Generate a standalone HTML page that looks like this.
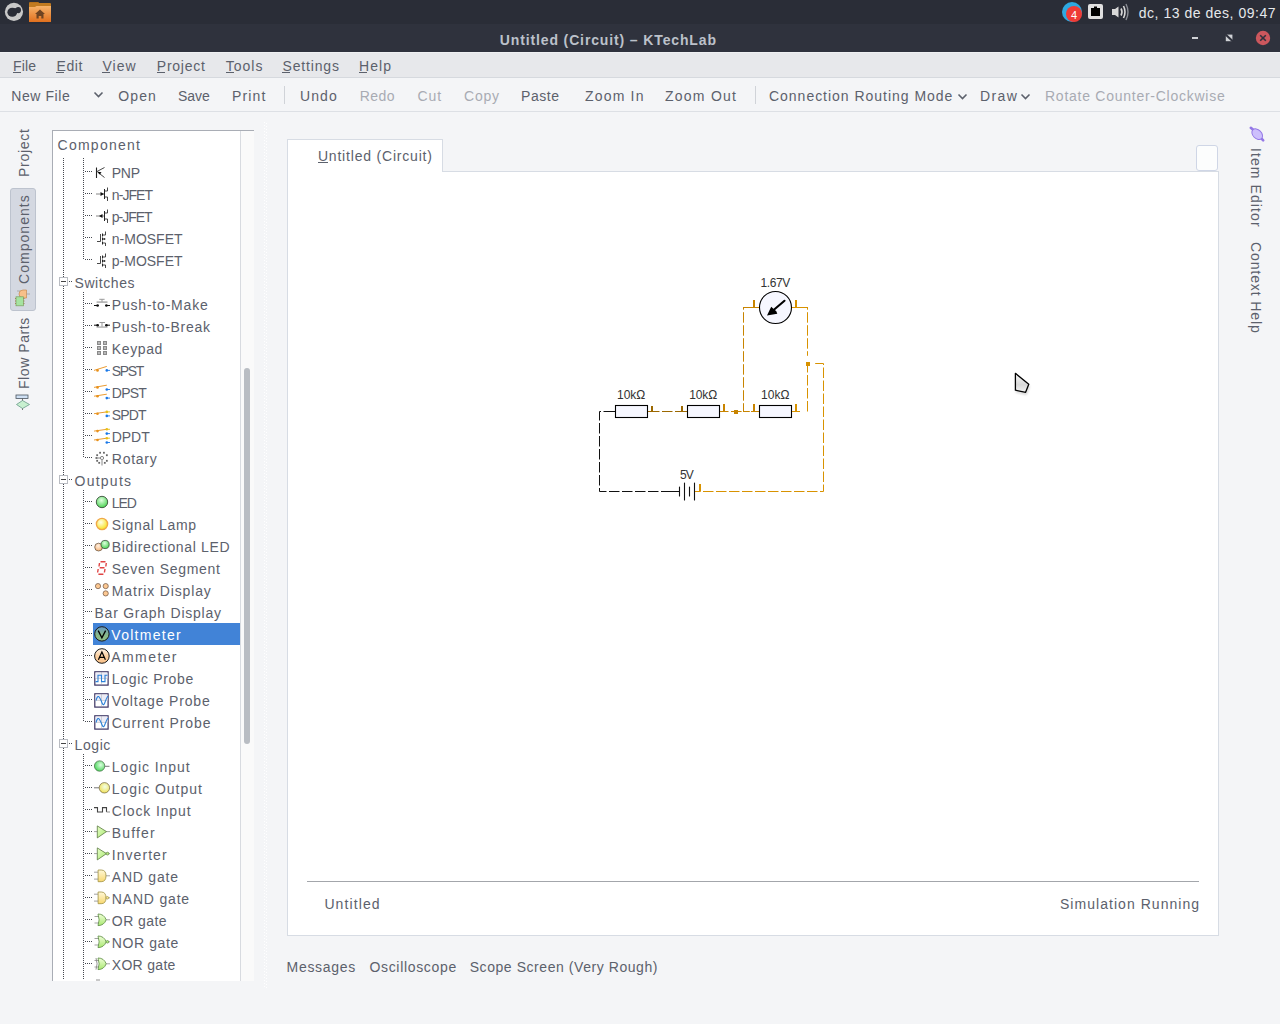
<!DOCTYPE html><html><head><meta charset="utf-8"><style>
html,body{margin:0;padding:0;width:1280px;height:1024px;overflow:hidden;background:#f4f5f7;position:relative;font-family:"Liberation Sans",sans-serif}
.t{position:absolute;white-space:nowrap;line-height:1;font-family:"Liberation Sans",sans-serif}
svg{overflow:visible}
</style></head><body>
<div style="position:absolute;left:0px;top:0px;width:1280px;height:24px;background:#2a2d37"></div>
<div style="position:absolute;left:0px;top:24px;width:1280px;height:28px;background:#2f323d"></div>
<div style="position:absolute;left:0px;top:52px;width:1280px;height:25px;background:#e7e8eb"></div>
<div style="position:absolute;left:0px;top:52px;width:1280px;height:1px;background:#eff0f2"></div>
<div style="position:absolute;left:0px;top:77px;width:1280px;height:1px;background:#d6d9de"></div>
<div style="position:absolute;left:0px;top:111px;width:1280px;height:1px;background:#dde0e5"></div>
<svg style="position:absolute;left:0;top:0" width="60" height="24">
<circle cx="13.95" cy="11.85" r="9.1" fill="#c8c8c8"/>
<ellipse cx="12.3" cy="12.3" rx="4.9" ry="4.5" fill="#2a2d37"/><ellipse cx="18.2" cy="10.1" rx="2.8" ry="3.1" fill="#2a2d37"/><path d="M13 8.5 L17 8 L17.5 12.5 L14 14 Z" fill="#2a2d37"/>
<rect x="29" y="2" width="10" height="4" rx="1" fill="#b4701a"/>
<rect x="29" y="3" width="22" height="5" rx="1" fill="#c07a20"/>
<defs><linearGradient id="fg" x1="0" y1="0" x2="0" y2="1"><stop offset="0" stop-color="#f6b36a"/><stop offset="1" stop-color="#e0701e"/></linearGradient></defs>
<path d="M29 7 L35 7 L36.5 6 L51 6 L51 22 L29 22 Z" fill="url(#fg)"/>
<path d="M40 9.5 L45 14 L43.5 14 L43.5 18.5 L41.3 18.5 L41.3 16 L38.7 16 L38.7 18.5 L36.5 18.5 L36.5 14 L35 14 Z" fill="#6e4422"/>
</svg>
<svg style="position:absolute;left:1055px;top:0" width="80" height="24">
<circle cx="17" cy="12" r="10" fill="#2ea8e0"/>
<circle cx="19" cy="14" r="8" fill="#ef3b36"/>
<text x="19" y="18.5" font-family="Liberation Sans" font-size="11" fill="#fff" text-anchor="middle">4</text>
<rect x="33" y="4" width="15" height="15" rx="2" fill="#e0e0e0"/>
<path d="M36 8 L39 8 L39 6.5 L42 6.5 L42 8 L45 8 L45 16 L36 16 Z" fill="#000"/>
<path d="M57 9 L60 9 L63.5 6.5 L63.5 17.5 L60 15 L57 15 Z" fill="#d8d8d8"/>
<path d="M66 8.5 Q68 12 66 15.5" stroke="#d8d8d8" stroke-width="1.6" fill="none"/>
<path d="M68.5 6 Q71.5 12 68.5 18" stroke="#d8d8d8" stroke-width="1.6" fill="none"/>
<path d="M71 4 Q75 12 71 20" stroke="#8a8d94" stroke-width="1.4" fill="none"/>
</svg>
<div class="t" style="left:1138.80px;top:6.15px;font-size:14px;letter-spacing:0.517px;color:#e6e8eb;font-weight:normal;">dc, 13 de des, 09:47</div>
<div class="t" style="left:499.80px;top:32.95px;font-size:14px;letter-spacing:0.869px;color:#bcc1ca;font-weight:bold;">Untitled (Circuit) – KTechLab</div>
<div style="position:absolute;left:1192px;top:37px;width:6px;height:2px;background:#d0d2d6"></div>
<svg style="position:absolute;left:1222px;top:30px" width="16" height="16">
<rect x="3.8" y="4.6" width="6.6" height="6.6" fill="#d0d2d6"/><path d="M3.3 4.2 L11 11.6" stroke="#2f323d" stroke-width="2.1"/></svg>
<svg style="position:absolute;left:1254px;top:29px" width="18" height="18">
<circle cx="9" cy="9" r="7.2" fill="#cc575d"/><path d="M6.2 6.2 L11.8 11.8 M11.8 6.2 L6.2 11.8" stroke="#2f323d" stroke-width="1.6"/></svg>
<div class="t" style="left:13.00px;top:59.15px;font-size:14px;letter-spacing:0.125px;color:#5c616c;font-weight:normal;">File</div>
<div style="position:absolute;left:13px;top:72px;width:8px;height:1px;background:#5c616c"></div>
<div class="t" style="left:56.50px;top:59.15px;font-size:14px;letter-spacing:0.625px;color:#5c616c;font-weight:normal;">Edit</div>
<div style="position:absolute;left:56px;top:72px;width:8px;height:1px;background:#5c616c"></div>
<div class="t" style="left:102.50px;top:59.15px;font-size:14px;letter-spacing:1.017px;color:#5c616c;font-weight:normal;">View</div>
<div style="position:absolute;left:102px;top:72px;width:8px;height:1px;background:#5c616c"></div>
<div class="t" style="left:156.80px;top:59.15px;font-size:14px;letter-spacing:0.762px;color:#5c616c;font-weight:normal;">Project</div>
<div style="position:absolute;left:157px;top:72px;width:8px;height:1px;background:#5c616c"></div>
<div class="t" style="left:225.80px;top:59.15px;font-size:14px;letter-spacing:0.987px;color:#5c616c;font-weight:normal;">Tools</div>
<div style="position:absolute;left:226px;top:72px;width:8px;height:1px;background:#5c616c"></div>
<div class="t" style="left:282.50px;top:59.15px;font-size:14px;letter-spacing:0.839px;color:#5c616c;font-weight:normal;">Settings</div>
<div style="position:absolute;left:282px;top:72px;width:8px;height:1px;background:#5c616c"></div>
<div class="t" style="left:359.00px;top:59.15px;font-size:14px;letter-spacing:1.083px;color:#5c616c;font-weight:normal;">Help</div>
<div style="position:absolute;left:359px;top:72px;width:8px;height:1px;background:#5c616c"></div>
<div class="t" style="left:11.20px;top:89.15px;font-size:14px;letter-spacing:0.586px;color:#5c616c;font-weight:normal;">New File</div>
<div class="t" style="left:118.30px;top:89.15px;font-size:14px;letter-spacing:1.083px;color:#5c616c;font-weight:normal;">Open</div>
<div class="t" style="left:178.00px;top:89.15px;font-size:14px;letter-spacing:-0.058px;color:#5c616c;font-weight:normal;">Save</div>
<div class="t" style="left:232.00px;top:89.15px;font-size:14px;letter-spacing:1.138px;color:#5c616c;font-weight:normal;">Print</div>
<div class="t" style="left:299.90px;top:89.15px;font-size:14px;letter-spacing:1.133px;color:#5c616c;font-weight:normal;">Undo</div>
<div class="t" style="left:359.70px;top:89.15px;font-size:14px;letter-spacing:0.433px;color:#a8abb3;font-weight:normal;">Redo</div>
<div class="t" style="left:417.50px;top:89.15px;font-size:14px;letter-spacing:0.875px;color:#a8abb3;font-weight:normal;">Cut</div>
<div class="t" style="left:464.00px;top:89.15px;font-size:14px;letter-spacing:0.792px;color:#a8abb3;font-weight:normal;">Copy</div>
<div class="t" style="left:521.00px;top:89.15px;font-size:14px;letter-spacing:0.562px;color:#5c616c;font-weight:normal;">Paste</div>
<div class="t" style="left:585.00px;top:89.15px;font-size:14px;letter-spacing:1.188px;color:#5c616c;font-weight:normal;">Zoom In</div>
<div class="t" style="left:665.00px;top:89.15px;font-size:14px;letter-spacing:1.250px;color:#5c616c;font-weight:normal;">Zoom Out</div>
<div class="t" style="left:769.00px;top:89.15px;font-size:14px;letter-spacing:0.978px;color:#5c616c;font-weight:normal;">Connection Routing Mode</div>
<div class="t" style="left:980.00px;top:89.15px;font-size:14px;letter-spacing:1.417px;color:#5c616c;font-weight:normal;">Draw</div>
<div class="t" style="left:1045.00px;top:89.15px;font-size:14px;letter-spacing:0.742px;color:#a8abb3;font-weight:normal;">Rotate Counter-Clockwise</div>
<div style="position:absolute;left:284px;top:86px;width:1px;height:18px;background:#d0d3d8"></div>
<div style="position:absolute;left:755px;top:86px;width:1px;height:18px;background:#d0d3d8"></div>
<svg style="position:absolute;left:93px;top:91px" width="12" height="8"><path d="M1.5 1.5 L5.5 5.5 L9.5 1.5" stroke="#5c616c" stroke-width="1.6" fill="none"/></svg>
<svg style="position:absolute;left:957px;top:93px" width="12" height="8"><path d="M1.5 1.5 L5.5 5.5 L9.5 1.5" stroke="#5c616c" stroke-width="1.6" fill="none"/></svg>
<svg style="position:absolute;left:1020px;top:93px" width="12" height="8"><path d="M1.5 1.5 L5.5 5.5 L9.5 1.5" stroke="#5c616c" stroke-width="1.6" fill="none"/></svg>
<div style="position:absolute;left:10px;top:188px;width:26px;height:123px;background:#d4d8e1;border:1px solid #bdc3ce;border-radius:3px;box-sizing:border-box"></div>
<div class="t" style="left:17.45px;top:177.00px;font-size:14px;letter-spacing:0.729px;color:#5c616c;transform-origin:0 0;transform:rotate(-90deg)">Project</div>
<div class="t" style="left:17.25px;top:284.00px;font-size:14px;letter-spacing:1.047px;color:#5c616c;transform-origin:0 0;transform:rotate(-90deg)">Components</div>
<div class="t" style="left:17.25px;top:388.80px;font-size:14px;letter-spacing:0.564px;color:#5c616c;transform-origin:0 0;transform:rotate(-90deg)">Flow Parts</div>
<div class="t" style="left:1262.65px;top:147.50px;font-size:14px;letter-spacing:1.085px;color:#5c616c;transform-origin:0 0;transform:rotate(90deg)">Item Editor</div>
<div class="t" style="left:1262.65px;top:242.30px;font-size:14px;letter-spacing:0.900px;color:#5c616c;transform-origin:0 0;transform:rotate(90deg)">Context Help</div>
<svg style="position:absolute;left:12px;top:286px" width="22" height="24">
<path d="M14.5 4 L11 4 Q7 4 7 8 Q7 12 11 12 L14.5 12 Z" fill="#f7c08a" stroke="#c88a50" stroke-width="0.7"/>
<path d="M14.5 8 L18 8 M5 5 L8 5" stroke="#999" stroke-width="0.7"/>
<rect x="4" y="10.8" width="7.5" height="9" fill="#a6e3a0" stroke="#7aa060" stroke-width="0.7"/>
<path d="M3 12.5 H4 M3 15 H4 M3 17.5 H4 M11.5 12.5 H12.5 M11.5 15 H12.5 M11.5 17.5 H12.5" stroke="#a07040" stroke-width="0.8"/>
</svg>
<svg style="position:absolute;left:12px;top:392px" width="22" height="22">
<rect x="4" y="3" width="12" height="3.5" fill="#cfe0f4" stroke="#4a5560" stroke-width="0.8"/>
<path d="M4.5 12.5 L10.5 8.5 L17.5 12.5 L10.5 16.5 Z" fill="#c8f0d0" stroke="#6a9a8a" stroke-width="0.8"/>
<path d="M10.5 6.5 L10.5 8.5 M10.5 16.5 L10.5 18" stroke="#555" stroke-width="0.8"/>
</svg>
<svg style="position:absolute;left:1248px;top:125px" width="18" height="18">
<path d="M2.8 2.8 L6 5.6" stroke="#9478e6" stroke-width="2.6" stroke-linecap="round"/>
<path d="M12.2 12.2 L15.2 15.4" stroke="#9478e6" stroke-width="2.6" stroke-linecap="round"/>
<ellipse cx="9.2" cy="9.2" rx="6.2" ry="4.3" transform="rotate(45 9.2 9.2)" fill="#cdbffc" stroke="#9478e6" stroke-width="1"/>
</svg>
<div style="position:absolute;left:52px;top:130px;width:202px;height:851px;background:#ffffff"></div>
<div style="position:absolute;left:52px;top:130px;width:1px;height:851px;background:#a9adb5"></div>
<div style="position:absolute;left:52px;top:130px;width:202px;height:1px;background:#a9adb5"></div>
<div style="position:absolute;left:240px;top:131px;width:1px;height:850px;background:#d8dbe0"></div>
<div style="position:absolute;left:241px;top:131px;width:13px;height:850px;background:#fafafa"></div>
<div style="position:absolute;left:244px;top:368px;width:6px;height:376px;background:#b9bdc3;border-radius:3px"></div>
<div style="position:absolute;left:264px;top:122px;width:1px;height:866px;background:repeating-linear-gradient(to bottom,#ffffff 0,#ffffff 1px,transparent 1px,transparent 3px)"></div>
<div style="position:absolute;left:266px;top:123px;width:1px;height:865px;background:repeating-linear-gradient(to bottom,#ffffff 0,#ffffff 1px,transparent 1px,transparent 3px)"></div>
<div class="t" style="left:57.50px;top:137.95px;font-size:14px;letter-spacing:1.266px;color:#5c616c;font-weight:normal;">Component</div>
<div style="position:absolute;left:93px;top:623px;width:147px;height:22px;background:#4183d7"></div>
<div style="position:absolute;left:63px;top:158px;width:1px;height:821px;background:repeating-linear-gradient(to bottom,#45484f 0,#45484f 1px,transparent 1px,transparent 2px)"></div>
<div style="position:absolute;left:83px;top:158px;width:1px;height:102px;background:repeating-linear-gradient(to bottom,#45484f 0,#45484f 1px,transparent 1px,transparent 2px)"></div>
<div style="position:absolute;left:83px;top:292px;width:1px;height:166px;background:repeating-linear-gradient(to bottom,#45484f 0,#45484f 1px,transparent 1px,transparent 2px)"></div>
<div style="position:absolute;left:83px;top:490px;width:1px;height:232px;background:repeating-linear-gradient(to bottom,#45484f 0,#45484f 1px,transparent 1px,transparent 2px)"></div>
<div style="position:absolute;left:83px;top:754px;width:1px;height:225px;background:repeating-linear-gradient(to bottom,#45484f 0,#45484f 1px,transparent 1px,transparent 2px)"></div>
<div style="position:absolute;left:85px;top:171px;width:8px;height:1px;background:repeating-linear-gradient(to right,#45484f 0,#45484f 1px,transparent 1px,transparent 2px)"></div>
<svg style="position:absolute;left:93px;top:164px" width="16" height="16"><g transform="translate(0,1)"><path d="M3.5 2.5 V13" stroke="#222" stroke-width="1.1"/><path d="M4 6.5 L11.5 2.5 M4.5 7 L11.5 12.5" stroke="#333" stroke-width="0.9"/><path d="M4.5 6.8 L8.5 7.2 L6.8 9.6 Z" fill="#000"/></g></svg>
<div class="t" style="left:111.80px;top:166.15px;font-size:14px;letter-spacing:-0.275px;color:#5c616c;font-weight:normal;">PNP</div>
<div style="position:absolute;left:85px;top:193px;width:8px;height:1px;background:repeating-linear-gradient(to right,#45484f 0,#45484f 1px,transparent 1px,transparent 2px)"></div>
<svg style="position:absolute;left:93px;top:186px" width="16" height="16"><g transform="translate(2,0)"><path d="M1 8 H9" stroke="#999" stroke-width="1.2"/><path d="M9 8 L5.5 6 L5.5 10 Z" fill="#111"/><path d="M9.5 3 V13" stroke="#222" stroke-width="1"/><path d="M10 5 H12.5 V1.5 M10 11 H12.5 V15" stroke="#333" stroke-width="0.9" fill="none"/></g></svg>
<div class="t" style="left:111.80px;top:188.15px;font-size:14px;letter-spacing:-0.935px;color:#5c616c;font-weight:normal;">n-JFET</div>
<div style="position:absolute;left:85px;top:215px;width:8px;height:1px;background:repeating-linear-gradient(to right,#45484f 0,#45484f 1px,transparent 1px,transparent 2px)"></div>
<svg style="position:absolute;left:93px;top:208px" width="16" height="16"><g transform="translate(2,0)"><path d="M1 8 H9" stroke="#999" stroke-width="1.2"/><path d="M4 8 L7.5 6 L7.5 10 Z" fill="#111"/><path d="M9.5 3 V13" stroke="#222" stroke-width="1"/><path d="M10 5 H12.5 V1.5 M10 11 H12.5 V15" stroke="#333" stroke-width="0.9" fill="none"/></g></svg>
<div class="t" style="left:111.80px;top:210.15px;font-size:14px;letter-spacing:-1.035px;color:#5c616c;font-weight:normal;">p-JFET</div>
<div style="position:absolute;left:85px;top:237px;width:8px;height:1px;background:repeating-linear-gradient(to right,#45484f 0,#45484f 1px,transparent 1px,transparent 2px)"></div>
<svg style="position:absolute;left:93px;top:230px" width="16" height="16"><path d="M4 11.5 H7.5 V4" stroke="#333" stroke-width="0.9" fill="none"/><path d="M9.5 3.5 V6.5 M9.5 7.5 V10.5 M9.5 11.5 V14.5" stroke="#222" stroke-width="1"/><path d="M10 5 H12.5 V1.5 M10 9 H12.5 M10 13 H12.5 V16" stroke="#333" stroke-width="0.9" fill="none"/><path d="M10 9 L12 8 L12 10 Z" fill="#222"/></svg>
<div class="t" style="left:111.80px;top:232.15px;font-size:14px;letter-spacing:-0.007px;color:#5c616c;font-weight:normal;">n-MOSFET</div>
<div style="position:absolute;left:85px;top:259px;width:8px;height:1px;background:repeating-linear-gradient(to right,#45484f 0,#45484f 1px,transparent 1px,transparent 2px)"></div>
<svg style="position:absolute;left:93px;top:252px" width="16" height="16"><path d="M4 11.5 H7.5 V4" stroke="#333" stroke-width="0.9" fill="none"/><path d="M9.5 3.5 V6.5 M9.5 7.5 V10.5 M9.5 11.5 V14.5" stroke="#222" stroke-width="1"/><path d="M10 5 H12.5 V1.5 M10 9 H12.5 M10 13 H12.5 V16" stroke="#333" stroke-width="0.9" fill="none"/><path d="M10 9 L12 8 L12 10 Z" fill="#222"/></svg>
<div class="t" style="left:111.80px;top:254.15px;font-size:14px;letter-spacing:-0.007px;color:#5c616c;font-weight:normal;">p-MOSFET</div>
<div style="position:absolute;left:59px;top:277px;width:9px;height:9px;border:1px solid #b9bcc2;background:#fff;box-sizing:border-box"></div>
<div style="position:absolute;left:61px;top:281px;width:5px;height:1px;background:#444"></div>
<div style="position:absolute;left:69px;top:281px;width:4px;height:1px;background:repeating-linear-gradient(to right,#45484f 0,#45484f 1px,transparent 1px,transparent 2px)"></div>
<div class="t" style="left:74.50px;top:276.15px;font-size:14px;letter-spacing:0.571px;color:#5c616c;font-weight:normal;">Switches</div>
<div style="position:absolute;left:85px;top:303px;width:8px;height:1px;background:repeating-linear-gradient(to right,#45484f 0,#45484f 1px,transparent 1px,transparent 2px)"></div>
<svg style="position:absolute;left:93px;top:296px" width="16" height="16"><path d="M6.3 3.3 H11.6 M9 3.3 V6" stroke="#999" stroke-width="1"/><path d="M3.6 6.1 H14.5" stroke="#aaa" stroke-width="1.5"/><path d="M1 9.5 H5.5 M12.5 9.5 H17" stroke="#111" stroke-width="1"/><circle cx="4.6" cy="9.5" r="1.3" fill="#111"/><circle cx="13.4" cy="9.5" r="1.3" fill="#111"/></svg>
<div class="t" style="left:111.80px;top:298.15px;font-size:14px;letter-spacing:0.798px;color:#5c616c;font-weight:normal;">Push-to-Make</div>
<div style="position:absolute;left:85px;top:325px;width:8px;height:1px;background:repeating-linear-gradient(to right,#45484f 0,#45484f 1px,transparent 1px,transparent 2px)"></div>
<svg style="position:absolute;left:93px;top:318px" width="16" height="16"><path d="M6.5 4.5 H12 M9 4.5 V8.8" stroke="#999" stroke-width="1"/><path d="M3.5 9.1 H14.5" stroke="#aaa" stroke-width="1.3"/><path d="M1 7.2 H5.5 M12.5 7.2 H17" stroke="#111" stroke-width="1"/><circle cx="4.6" cy="7.2" r="1.3" fill="#111"/><circle cx="13.4" cy="7.2" r="1.3" fill="#111"/></svg>
<div class="t" style="left:111.80px;top:320.15px;font-size:14px;letter-spacing:0.731px;color:#5c616c;font-weight:normal;">Push-to-Break</div>
<div style="position:absolute;left:85px;top:347px;width:8px;height:1px;background:repeating-linear-gradient(to right,#45484f 0,#45484f 1px,transparent 1px,transparent 2px)"></div>
<svg style="position:absolute;left:93px;top:340px" width="16" height="16"><rect x="4.5" y="1.5" width="3" height="3" fill="#b8b8b8" stroke="#8a8a8a" stroke-width="1"/><rect x="4.5" y="6.5" width="3" height="3" fill="#b8b8b8" stroke="#8a8a8a" stroke-width="1"/><rect x="4.5" y="11.5" width="3" height="3" fill="#b8b8b8" stroke="#8a8a8a" stroke-width="1"/><rect x="10.5" y="1.5" width="3" height="3" fill="#b8b8b8" stroke="#8a8a8a" stroke-width="1"/><rect x="10.5" y="6.5" width="3" height="3" fill="#b8b8b8" stroke="#8a8a8a" stroke-width="1"/><rect x="10.5" y="11.5" width="3" height="3" fill="#b8b8b8" stroke="#8a8a8a" stroke-width="1"/></svg>
<div class="t" style="left:111.80px;top:342.15px;font-size:14px;letter-spacing:0.620px;color:#5c616c;font-weight:normal;">Keypad</div>
<div style="position:absolute;left:85px;top:369px;width:8px;height:1px;background:repeating-linear-gradient(to right,#45484f 0,#45484f 1px,transparent 1px,transparent 2px)"></div>
<svg style="position:absolute;left:93px;top:362px" width="16" height="16"><path d="M1 8.4 L13.8 4.4" stroke="#e8901a" stroke-width="0.9"/><circle cx="4.5" cy="8.4" r="1.3" fill="#e8901a"/><path d="M13.8 8.4 H17" stroke="#1a78e8" stroke-width="0.9"/><circle cx="13.8" cy="8.4" r="1.3" fill="#1a78e8"/></svg>
<div class="t" style="left:111.80px;top:364.15px;font-size:14px;letter-spacing:-1.342px;color:#5c616c;font-weight:normal;">SPST</div>
<div style="position:absolute;left:85px;top:391px;width:8px;height:1px;background:repeating-linear-gradient(to right,#45484f 0,#45484f 1px,transparent 1px,transparent 2px)"></div>
<svg style="position:absolute;left:93px;top:384px" width="16" height="16"><path d="M1 3.4 L13.8 1.2" stroke="#e8901a" stroke-width="0.9"/><circle cx="4.5" cy="3.4" r="1.3" fill="#e8901a"/><path d="M13.8 5.5 H17" stroke="#1a78e8" stroke-width="0.9"/><circle cx="13.8" cy="5.5" r="1.3" fill="#1a78e8"/><path d="M1 12.2 L13.8 10.2" stroke="#e8901a" stroke-width="0.9"/><circle cx="4.5" cy="12.2" r="1.3" fill="#e8901a"/><path d="M13.8 14.1 H17" stroke="#1a78e8" stroke-width="0.9"/><circle cx="13.8" cy="14.1" r="1.3" fill="#1a78e8"/></svg>
<div class="t" style="left:111.80px;top:386.15px;font-size:14px;letter-spacing:-0.758px;color:#5c616c;font-weight:normal;">DPST</div>
<div style="position:absolute;left:85px;top:413px;width:8px;height:1px;background:repeating-linear-gradient(to right,#45484f 0,#45484f 1px,transparent 1px,transparent 2px)"></div>
<svg style="position:absolute;left:93px;top:406px" width="16" height="16"><path d="M1 7.7 L13.8 5.9" stroke="#e8901a" stroke-width="0.9"/><circle cx="4.5" cy="7.7" r="1.3" fill="#e8901a"/><path d="M13.8 9.9 H17" stroke="#1a78e8" stroke-width="0.9"/><circle cx="13.8" cy="9.9" r="1.3" fill="#1a78e8"/><path d="M13.8 5.9 H17" stroke="#e8c018" stroke-width="0.9"/><circle cx="13.8" cy="5.9" r="1.3" fill="#e8c018"/></svg>
<div class="t" style="left:111.80px;top:408.15px;font-size:14px;letter-spacing:-0.892px;color:#5c616c;font-weight:normal;">SPDT</div>
<div style="position:absolute;left:85px;top:435px;width:8px;height:1px;background:repeating-linear-gradient(to right,#45484f 0,#45484f 1px,transparent 1px,transparent 2px)"></div>
<svg style="position:absolute;left:93px;top:428px" width="16" height="16"><path d="M1 3.1 L13.8 1.3" stroke="#e8901a" stroke-width="0.9"/><circle cx="4.5" cy="3.1" r="1.3" fill="#e8901a"/><path d="M13.8 5.6 H17" stroke="#1a78e8" stroke-width="0.9"/><circle cx="13.8" cy="5.6" r="1.3" fill="#1a78e8"/><path d="M13.8 1.3 H17" stroke="#e8c018" stroke-width="0.9"/><circle cx="13.8" cy="1.3" r="1.3" fill="#e8c018"/><path d="M1 12 L13.8 10.2" stroke="#e8901a" stroke-width="0.9"/><circle cx="4.5" cy="12" r="1.3" fill="#e8901a"/><path d="M13.8 14.5 H17" stroke="#1a78e8" stroke-width="0.9"/><circle cx="13.8" cy="14.5" r="1.3" fill="#1a78e8"/><path d="M13.8 10.2 H17" stroke="#e8c018" stroke-width="0.9"/><circle cx="13.8" cy="10.2" r="1.3" fill="#e8c018"/></svg>
<div class="t" style="left:111.80px;top:430.15px;font-size:14px;letter-spacing:-0.075px;color:#5c616c;font-weight:normal;">DPDT</div>
<div style="position:absolute;left:85px;top:457px;width:8px;height:1px;background:repeating-linear-gradient(to right,#45484f 0,#45484f 1px,transparent 1px,transparent 2px)"></div>
<svg style="position:absolute;left:93px;top:450px" width="16" height="16"><rect x="6.18" y="1.84" width="1.8" height="1.8" fill="#666"/><rect x="10.02" y="1.84" width="1.8" height="1.8" fill="#666"/><rect x="12.95" y="4.30" width="1.8" height="1.8" fill="#666"/><rect x="12.95" y="9.90" width="1.8" height="1.8" fill="#666"/><rect x="3.25" y="9.90" width="1.8" height="1.8" fill="#666"/><rect x="3.25" y="4.30" width="1.8" height="1.8" fill="#666"/><rect x="2.50" y="7.10" width="1.8" height="1.8" fill="#666"/><rect x="10.90" y="11.95" width="1.8" height="1.8" fill="#666"/><rect x="5.30" y="11.95" width="1.8" height="1.8" fill="#666"/><path d="M3.4 8 H7.5" stroke="#777" stroke-width="0.9"/><circle cx="9" cy="8" r="1.6" fill="#fff" stroke="#777" stroke-width="0.9"/><path d="M9 9.6 V15.5" stroke="#aaa" stroke-width="1.4"/></svg>
<div class="t" style="left:111.80px;top:452.15px;font-size:14px;letter-spacing:0.750px;color:#5c616c;font-weight:normal;">Rotary</div>
<div style="position:absolute;left:59px;top:475px;width:9px;height:9px;border:1px solid #b9bcc2;background:#fff;box-sizing:border-box"></div>
<div style="position:absolute;left:61px;top:479px;width:5px;height:1px;background:#444"></div>
<div style="position:absolute;left:69px;top:479px;width:4px;height:1px;background:repeating-linear-gradient(to right,#45484f 0,#45484f 1px,transparent 1px,transparent 2px)"></div>
<div class="t" style="left:74.50px;top:474.15px;font-size:14px;letter-spacing:1.250px;color:#5c616c;font-weight:normal;">Outputs</div>
<div style="position:absolute;left:85px;top:501px;width:8px;height:1px;background:repeating-linear-gradient(to right,#45484f 0,#45484f 1px,transparent 1px,transparent 2px)"></div>
<svg style="position:absolute;left:93px;top:494px" width="16" height="16"><defs><radialGradient id="gl" cx="0.45" cy="0.35" r="0.7"><stop offset="0" stop-color="#e0ffe0"/><stop offset="1" stop-color="#40d048"/></radialGradient></defs><circle cx="9" cy="8" r="5.7" fill="url(#gl)" stroke="#2a3a2a" stroke-width="0.8"/></svg>
<div class="t" style="left:111.80px;top:496.15px;font-size:14px;letter-spacing:-1.025px;color:#5c616c;font-weight:normal;">LED</div>
<div style="position:absolute;left:85px;top:523px;width:8px;height:1px;background:repeating-linear-gradient(to right,#45484f 0,#45484f 1px,transparent 1px,transparent 2px)"></div>
<svg style="position:absolute;left:93px;top:516px" width="16" height="16"><defs><radialGradient id="yl" cx="0.4" cy="0.35" r="0.7"><stop offset="0" stop-color="#ffffe8"/><stop offset="1" stop-color="#f8e010"/></radialGradient></defs><circle cx="9" cy="8" r="5.6" fill="url(#yl)" stroke="#f0a848" stroke-width="1.4"/></svg>
<div class="t" style="left:111.80px;top:518.15px;font-size:14px;letter-spacing:0.642px;color:#5c616c;font-weight:normal;">Signal Lamp</div>
<div style="position:absolute;left:85px;top:545px;width:8px;height:1px;background:repeating-linear-gradient(to right,#45484f 0,#45484f 1px,transparent 1px,transparent 2px)"></div>
<svg style="position:absolute;left:93px;top:538px" width="16" height="16"><defs><radialGradient id="bo" cx="0.45" cy="0.35" r="0.7"><stop offset="0" stop-color="#fff0e0"/><stop offset="1" stop-color="#f8b070"/></radialGradient><radialGradient id="bg" cx="0.45" cy="0.35" r="0.7"><stop offset="0" stop-color="#e0ffe0"/><stop offset="1" stop-color="#40d048"/></radialGradient></defs><circle cx="5.6" cy="9.1" r="3.9" fill="url(#bo)" stroke="#5a4a3a" stroke-width="0.7"/><circle cx="12.1" cy="6.5" r="4.1" fill="url(#bg)" stroke="#2a3a2a" stroke-width="0.7"/></svg>
<div class="t" style="left:111.80px;top:540.15px;font-size:14px;letter-spacing:0.645px;color:#5c616c;font-weight:normal;">Bidirectional LED</div>
<div style="position:absolute;left:85px;top:567px;width:8px;height:1px;background:repeating-linear-gradient(to right,#45484f 0,#45484f 1px,transparent 1px,transparent 2px)"></div>
<svg style="position:absolute;left:93px;top:560px" width="16" height="16"><g stroke="#e04444" stroke-width="1.4" fill="none"><path d="M7.5 1.8 H12.5 M6.7 7.7 H11.5 M5.4 14.3 H10.4"/><path d="M6.5 3 L6 6.5 M13.3 3 L12.8 6.5 M5.2 9 L4.6 12.5 M12 9 L11.4 12.5"/></g></svg>
<div class="t" style="left:111.80px;top:562.15px;font-size:14px;letter-spacing:0.715px;color:#5c616c;font-weight:normal;">Seven Segment</div>
<div style="position:absolute;left:85px;top:589px;width:8px;height:1px;background:repeating-linear-gradient(to right,#45484f 0,#45484f 1px,transparent 1px,transparent 2px)"></div>
<svg style="position:absolute;left:93px;top:582px" width="16" height="16"><circle cx="5" cy="4.1" r="2.6" fill="#fcc892" stroke="#6a5040" stroke-width="0.7"/><circle cx="12.7" cy="4.1" r="2.6" fill="#fcc892" stroke="#6a5040" stroke-width="0.7"/><circle cx="12.7" cy="11.4" r="2.6" fill="#fcc892" stroke="#6a5040" stroke-width="0.7"/></svg>
<div class="t" style="left:111.80px;top:584.15px;font-size:14px;letter-spacing:0.856px;color:#5c616c;font-weight:normal;">Matrix Display</div>
<div style="position:absolute;left:85px;top:611px;width:8px;height:1px;background:repeating-linear-gradient(to right,#45484f 0,#45484f 1px,transparent 1px,transparent 2px)"></div>
<div class="t" style="left:94.50px;top:606.15px;font-size:14px;letter-spacing:0.758px;color:#5c616c;font-weight:normal;">Bar Graph Display</div>
<div style="position:absolute;left:85px;top:633px;width:8px;height:1px;background:repeating-linear-gradient(to right,#45484f 0,#45484f 1px,transparent 1px,transparent 2px)"></div>
<svg style="position:absolute;left:93px;top:626px" width="16" height="16"><defs><linearGradient id="vg" x1="0" y1="0" x2="0" y2="1"><stop offset="0" stop-color="#6898c0"/><stop offset="0.6" stop-color="#88b888"/><stop offset="1" stop-color="#90bc88"/></linearGradient></defs><circle cx="8.9" cy="7.9" r="7.2" fill="url(#vg)" stroke="#1a1a1a" stroke-width="1"/><path d="M5.2 4.6 L8.9 11.8 L12.6 4.6" stroke="#000" stroke-width="1.3" fill="none"/></svg>
<div class="t" style="left:111.30px;top:628.15px;font-size:14px;letter-spacing:1.284px;color:#ffffff;font-weight:normal;">Voltmeter</div>
<div style="position:absolute;left:85px;top:655px;width:8px;height:1px;background:repeating-linear-gradient(to right,#45484f 0,#45484f 1px,transparent 1px,transparent 2px)"></div>
<svg style="position:absolute;left:93px;top:648px" width="16" height="16"><defs><linearGradient id="ag" x1="0" y1="0" x2="0" y2="1"><stop offset="0" stop-color="#fff4e8"/><stop offset="0.5" stop-color="#fcd0a0"/><stop offset="1" stop-color="#f8c088"/></linearGradient></defs><circle cx="8.9" cy="8" r="7.3" fill="url(#ag)" stroke="#1a1a1a" stroke-width="1"/><path d="M5.4 11.8 L8.9 4 L12.4 11.8 M6.6 9.4 H11.2" stroke="#000" stroke-width="1.2" fill="none"/></svg>
<div class="t" style="left:111.30px;top:650.15px;font-size:14px;letter-spacing:1.408px;color:#5c616c;font-weight:normal;">Ammeter</div>
<div style="position:absolute;left:85px;top:677px;width:8px;height:1px;background:repeating-linear-gradient(to right,#45484f 0,#45484f 1px,transparent 1px,transparent 2px)"></div>
<svg style="position:absolute;left:93px;top:670px" width="16" height="16"><rect x="1.8" y="1.8" width="13.3" height="13.3" fill="#fff" stroke="#3a3262" stroke-width="1.2"/><rect x="2.5" y="2.5" width="12" height="6" fill="#ececf6"/><path d="M8.5 2.5 V14.5 M2.5 8.5 H14.5" stroke="#999" stroke-width="0.7" stroke-dasharray="1 1"/><path d="M2.5 11.6 H5 V5.3 H8.5 V11.6 H12 V5.3 H14.5" stroke="#2a80d8" stroke-width="1.1" fill="none"/></svg>
<div class="t" style="left:111.80px;top:672.15px;font-size:14px;letter-spacing:0.675px;color:#5c616c;font-weight:normal;">Logic Probe</div>
<div style="position:absolute;left:85px;top:699px;width:8px;height:1px;background:repeating-linear-gradient(to right,#45484f 0,#45484f 1px,transparent 1px,transparent 2px)"></div>
<svg style="position:absolute;left:93px;top:692px" width="16" height="16"><rect x="1.8" y="1.8" width="13.3" height="13.3" fill="#fff" stroke="#3a3262" stroke-width="1.2"/><rect x="2.5" y="2.5" width="12" height="6" fill="#ececf6"/><path d="M8.5 2.5 V14.5 M2.5 8.5 H14.5" stroke="#999" stroke-width="0.7" stroke-dasharray="1 1"/><path d="M3 8.5 Q4.5 2.5 6.5 5.5 Q7.8 7.5 8.5 9.5 Q10 14.5 11.5 11.5 Q13.5 6 15 4" stroke="#2a80d8" stroke-width="1.1" fill="none"/></svg>
<div class="t" style="left:111.80px;top:694.15px;font-size:14px;letter-spacing:0.833px;color:#5c616c;font-weight:normal;">Voltage Probe</div>
<div style="position:absolute;left:85px;top:721px;width:8px;height:1px;background:repeating-linear-gradient(to right,#45484f 0,#45484f 1px,transparent 1px,transparent 2px)"></div>
<svg style="position:absolute;left:93px;top:714px" width="16" height="16"><rect x="1.8" y="1.8" width="13.3" height="13.3" fill="#fff" stroke="#3a3262" stroke-width="1.2"/><rect x="2.5" y="2.5" width="12" height="6" fill="#ececf6"/><path d="M8.5 2.5 V14.5 M2.5 8.5 H14.5" stroke="#999" stroke-width="0.7" stroke-dasharray="1 1"/><path d="M3 8.5 Q4.5 2.5 6.5 5.5 Q7.8 7.5 8.5 9.5 Q10 14.5 11.5 11.5 Q13.5 6 15 4" stroke="#2a80d8" stroke-width="1.1" fill="none"/></svg>
<div class="t" style="left:111.80px;top:716.15px;font-size:14px;letter-spacing:0.892px;color:#5c616c;font-weight:normal;">Current Probe</div>
<div style="position:absolute;left:59px;top:739px;width:9px;height:9px;border:1px solid #b9bcc2;background:#fff;box-sizing:border-box"></div>
<div style="position:absolute;left:61px;top:743px;width:5px;height:1px;background:#444"></div>
<div style="position:absolute;left:69px;top:743px;width:4px;height:1px;background:repeating-linear-gradient(to right,#45484f 0,#45484f 1px,transparent 1px,transparent 2px)"></div>
<div class="t" style="left:74.50px;top:738.15px;font-size:14px;letter-spacing:0.600px;color:#5c616c;font-weight:normal;">Logic</div>
<div style="position:absolute;left:85px;top:765px;width:8px;height:1px;background:repeating-linear-gradient(to right,#45484f 0,#45484f 1px,transparent 1px,transparent 2px)"></div>
<svg style="position:absolute;left:93px;top:758px" width="16" height="16"><defs><radialGradient id="lg1" cx="0.6" cy="0.4" r="0.7"><stop offset="0" stop-color="#dcffe0"/><stop offset="1" stop-color="#3ad04a"/></radialGradient></defs><circle cx="6.6" cy="8" r="5.2" fill="url(#lg1)" stroke="#4a6a4a" stroke-width="0.7"/><path d="M11.8 8.3 H16.5" stroke="#666" stroke-width="0.9"/></svg>
<div class="t" style="left:111.80px;top:760.15px;font-size:14px;letter-spacing:0.940px;color:#5c616c;font-weight:normal;">Logic Input</div>
<div style="position:absolute;left:85px;top:787px;width:8px;height:1px;background:repeating-linear-gradient(to right,#45484f 0,#45484f 1px,transparent 1px,transparent 2px)"></div>
<svg style="position:absolute;left:93px;top:780px" width="16" height="16"><defs><radialGradient id="lg2" cx="0.55" cy="0.4" r="0.7"><stop offset="0" stop-color="#f0ffe8"/><stop offset="1" stop-color="#f2dc40"/></radialGradient></defs><path d="M1 7.8 H6" stroke="#666" stroke-width="0.9"/><circle cx="11.4" cy="7.8" r="5.2" fill="url(#lg2)" stroke="#6a6040" stroke-width="0.7"/></svg>
<div class="t" style="left:111.80px;top:782.15px;font-size:14px;letter-spacing:0.966px;color:#5c616c;font-weight:normal;">Logic Output</div>
<div style="position:absolute;left:85px;top:809px;width:8px;height:1px;background:repeating-linear-gradient(to right,#45484f 0,#45484f 1px,transparent 1px,transparent 2px)"></div>
<svg style="position:absolute;left:93px;top:802px" width="16" height="16"><path d="M1 5.6 H4.5 V10 H9.5 V5.6 H13.5 V10" stroke="#444" stroke-width="1.1" fill="none"/><path d="M13.5 10 H17" stroke="#999" stroke-width="1.1"/></svg>
<div class="t" style="left:111.80px;top:804.15px;font-size:14px;letter-spacing:0.870px;color:#5c616c;font-weight:normal;">Clock Input</div>
<div style="position:absolute;left:85px;top:831px;width:8px;height:1px;background:repeating-linear-gradient(to right,#45484f 0,#45484f 1px,transparent 1px,transparent 2px)"></div>
<svg style="position:absolute;left:93px;top:824px" width="16" height="16"><defs><linearGradient id="tg" x1="0" y1="0" x2="1" y2="1"><stop offset="0" stop-color="#e8ffc8"/><stop offset="1" stop-color="#a8e870"/></linearGradient></defs><path d="M1 7.6 H4.5 M13 7.6 H17" stroke="#999" stroke-width="0.9"/><path d="M4.3 1.9 L13.5 7.6 L4.3 13.9 Z" fill="url(#tg)" stroke="#5a7a40" stroke-width="0.8"/></svg>
<div class="t" style="left:111.80px;top:826.15px;font-size:14px;letter-spacing:1.155px;color:#5c616c;font-weight:normal;">Buffer</div>
<div style="position:absolute;left:85px;top:853px;width:8px;height:1px;background:repeating-linear-gradient(to right,#45484f 0,#45484f 1px,transparent 1px,transparent 2px)"></div>
<svg style="position:absolute;left:93px;top:846px" width="16" height="16"><defs><linearGradient id="tg" x1="0" y1="0" x2="1" y2="1"><stop offset="0" stop-color="#e8ffc8"/><stop offset="1" stop-color="#a8e870"/></linearGradient></defs><path d="M1 7.6 H4.5 M13 7.6 H17" stroke="#999" stroke-width="0.9"/><path d="M4.3 1.9 L13.5 7.6 L4.3 13.9 Z" fill="url(#tg)" stroke="#5a7a40" stroke-width="0.8"/><circle cx="14.5" cy="7.6" r="1.4" fill="#b8f080" stroke="#5a7a40" stroke-width="0.7"/></svg>
<div class="t" style="left:111.80px;top:848.15px;font-size:14px;letter-spacing:1.043px;color:#5c616c;font-weight:normal;">Inverter</div>
<div style="position:absolute;left:85px;top:875px;width:8px;height:1px;background:repeating-linear-gradient(to right,#45484f 0,#45484f 1px,transparent 1px,transparent 2px)"></div>
<svg style="position:absolute;left:93px;top:868px" width="16" height="16"><defs><linearGradient id="ng" x1="0" y1="0" x2="0" y2="1"><stop offset="0" stop-color="#fff8d8"/><stop offset="1" stop-color="#f8d870"/></linearGradient></defs><path d="M1 4.2 H5.2 M1 11.1 H5.2 M13 7.8 H17" stroke="#999" stroke-width="0.9"/><path d="M5.1 2 H8.2 Q13 2 13 7.85 Q13 13.7 8.2 13.7 H5.1 Z" fill="url(#ng)" stroke="#a09040" stroke-width="0.8"/></svg>
<div class="t" style="left:111.80px;top:870.15px;font-size:14px;letter-spacing:0.779px;color:#5c616c;font-weight:normal;">AND gate</div>
<div style="position:absolute;left:85px;top:897px;width:8px;height:1px;background:repeating-linear-gradient(to right,#45484f 0,#45484f 1px,transparent 1px,transparent 2px)"></div>
<svg style="position:absolute;left:93px;top:890px" width="16" height="16"><defs><linearGradient id="ng" x1="0" y1="0" x2="0" y2="1"><stop offset="0" stop-color="#fff8d8"/><stop offset="1" stop-color="#f8d870"/></linearGradient></defs><path d="M1 4.2 H5.2 M1 11.1 H5.2 M13 7.8 H17" stroke="#999" stroke-width="0.9"/><path d="M5.1 2 H8.2 Q13 2 13 7.85 Q13 13.7 8.2 13.7 H5.1 Z" fill="url(#ng)" stroke="#a09040" stroke-width="0.8"/><circle cx="14.3" cy="7.8" r="1.3" fill="#fbe890" stroke="#a09040" stroke-width="0.7"/></svg>
<div class="t" style="left:111.80px;top:892.15px;font-size:14px;letter-spacing:0.816px;color:#5c616c;font-weight:normal;">NAND gate</div>
<div style="position:absolute;left:85px;top:919px;width:8px;height:1px;background:repeating-linear-gradient(to right,#45484f 0,#45484f 1px,transparent 1px,transparent 2px)"></div>
<svg style="position:absolute;left:93px;top:912px" width="16" height="16"><defs><linearGradient id="og" x1="0" y1="0" x2="0" y2="1"><stop offset="0" stop-color="#f0ffd8"/><stop offset="1" stop-color="#a8e870"/></linearGradient></defs><path d="M1.5 4.5 H6.5 M1.5 11 H6.5 M13 7.8 H17" stroke="#999" stroke-width="0.9"/><path d="M5 2 Q11 2 13.2 7.8 Q11 13.6 5 13.6 Q7.2 7.8 5 2 Z" fill="url(#og)" stroke="#5a8a40" stroke-width="0.8"/></svg>
<div class="t" style="left:111.80px;top:914.15px;font-size:14px;letter-spacing:0.446px;color:#5c616c;font-weight:normal;">OR gate</div>
<div style="position:absolute;left:85px;top:941px;width:8px;height:1px;background:repeating-linear-gradient(to right,#45484f 0,#45484f 1px,transparent 1px,transparent 2px)"></div>
<svg style="position:absolute;left:93px;top:934px" width="16" height="16"><defs><linearGradient id="og" x1="0" y1="0" x2="0" y2="1"><stop offset="0" stop-color="#f0ffd8"/><stop offset="1" stop-color="#a8e870"/></linearGradient></defs><path d="M1.5 4.5 H6.5 M1.5 11 H6.5 M13 7.8 H17" stroke="#999" stroke-width="0.9"/><path d="M5 2 Q11 2 13.2 7.8 Q11 13.6 5 13.6 Q7.2 7.8 5 2 Z" fill="url(#og)" stroke="#5a8a40" stroke-width="0.8"/><circle cx="14.4" cy="7.8" r="1.3" fill="#b8f080" stroke="#5a8a40" stroke-width="0.7"/></svg>
<div class="t" style="left:111.80px;top:936.15px;font-size:14px;letter-spacing:0.607px;color:#5c616c;font-weight:normal;">NOR gate</div>
<div style="position:absolute;left:85px;top:963px;width:8px;height:1px;background:repeating-linear-gradient(to right,#45484f 0,#45484f 1px,transparent 1px,transparent 2px)"></div>
<svg style="position:absolute;left:93px;top:956px" width="16" height="16"><defs><linearGradient id="og" x1="0" y1="0" x2="0" y2="1"><stop offset="0" stop-color="#f0ffd8"/><stop offset="1" stop-color="#a8e870"/></linearGradient></defs><path d="M1.5 4.5 H6.5 M1.5 11 H6.5 M13 7.8 H17" stroke="#999" stroke-width="0.9"/><path d="M5 2 Q11 2 13.2 7.8 Q11 13.6 5 13.6 Q7.2 7.8 5 2 Z" fill="url(#og)" stroke="#5a8a40" stroke-width="0.8"/><path d="M3 2 Q5.2 7.8 3 13.6" stroke="#888" stroke-width="0.9" fill="none"/></svg>
<div class="t" style="left:111.80px;top:958.15px;font-size:14px;letter-spacing:0.300px;color:#5c616c;font-weight:normal;">XOR gate</div>
<div style="position:absolute;left:96px;top:979px;width:4px;height:2px;background:#c8c8c8"></div>
<div style="position:absolute;left:287px;top:171px;width:932px;height:765px;background:#ffffff;border:1px solid #d7dce4;box-sizing:border-box"></div>
<div style="position:absolute;left:287px;top:139px;width:156px;height:33px;background:#ffffff;border:1px solid #d7dce4;border-bottom:none;box-sizing:border-box"></div>
<div class="t" style="left:317.90px;top:149.15px;font-size:14px;letter-spacing:0.807px;color:#5c616c;font-weight:normal;">Untitled (Circuit)</div>
<div style="position:absolute;left:318px;top:162px;width:10px;height:1px;background:#5c616c"></div>
<div style="position:absolute;left:1196px;top:145px;width:22px;height:26px;background:#fcfdfd;border:1px solid #cfd6e6;border-radius:3px;box-sizing:border-box"></div>
<div style="position:absolute;left:307px;top:881px;width:892px;height:1px;background:#a3a6ab"></div>
<div class="t" style="left:324.40px;top:897.15px;font-size:14px;letter-spacing:1.114px;color:#5c616c;font-weight:normal;">Untitled</div>
<div class="t" style="left:1060.00px;top:897.15px;font-size:14px;letter-spacing:1.037px;color:#5c616c;font-weight:normal;">Simulation Running</div>
<div class="t" style="left:286.60px;top:960.15px;font-size:14px;letter-spacing:0.693px;color:#5c616c;font-weight:normal;">Messages</div>
<div class="t" style="left:369.40px;top:960.15px;font-size:14px;letter-spacing:0.684px;color:#5c616c;font-weight:normal;">Oscilloscope</div>
<div class="t" style="left:469.70px;top:960.15px;font-size:14px;letter-spacing:0.559px;color:#5c616c;font-weight:normal;">Scope Screen (Very Rough)</div>
<svg style="position:absolute;left:0;top:0" width="1280" height="1024"><path d="M607 411.5 L615 411.5" stroke="#111111" stroke-width="1" fill="none" stroke-linecap="butt"/><path d="M607 411.5 H599.5 V491.5 H671" stroke="#111111" stroke-width="1" fill="none" stroke-dasharray="10.5 2.5" stroke-dashoffset="7"/><path d="M671 491.5 L680 491.5" stroke="#111111" stroke-width="1" fill="none" stroke-linecap="butt"/><path d="M679.5 487 L679.5 496" stroke="#111111" stroke-width="1.1" fill="none" stroke-linecap="round"/><path d="M684.5 483 L684.5 500" stroke="#111111" stroke-width="1.1" fill="none" stroke-linecap="round"/><path d="M689.5 487 L689.5 496" stroke="#111111" stroke-width="1.1" fill="none" stroke-linecap="round"/><path d="M694.5 483 L694.5 500" stroke="#111111" stroke-width="1.1" fill="none" stroke-linecap="round"/><rect x="615.5" y="405.5" width="32" height="12" fill="#f6f7ff" stroke="#000" stroke-width="1.1"/><rect x="687.5" y="405.5" width="32" height="12" fill="#f6f7ff" stroke="#000" stroke-width="1.1"/><rect x="759.5" y="405.5" width="32" height="12" fill="#f6f7ff" stroke="#000" stroke-width="1.1"/><path d="M648 411.5 L656 411.5" stroke="#9c6800" stroke-width="1" fill="none" stroke-linecap="butt"/><path d="M656 411.5 H680" stroke="#9c6800" stroke-width="1" fill="none" stroke-dasharray="10.5 2.5" stroke-dashoffset="7"/><path d="M680 411.5 L687 411.5" stroke="#9c6800" stroke-width="1" fill="none" stroke-linecap="butt"/><rect x="651" y="406" width="2" height="5.5" fill="#9c6800"/><rect x="681" y="406" width="2" height="5.5" fill="#9c6800"/><path d="M720 411.5 L728.5 411.5" stroke="#c88400" stroke-width="1" fill="none" stroke-linecap="butt"/><path d="M731 411.5 L741.6 411.5" stroke="#c88400" stroke-width="1" fill="none" stroke-linecap="butt"/><rect x="734" y="410" width="4" height="4" fill="#c88400"/><path d="M743.5 307.5 V411.5" stroke="#c88400" stroke-width="1" fill="none" stroke-dasharray="10.5 2.5" stroke-dashoffset="8.3"/><path d="M743 411.5 L749.8 411.5" stroke="#c88400" stroke-width="1" fill="none" stroke-linecap="butt"/><path d="M751 411.5 L759 411.5" stroke="#c88400" stroke-width="1" fill="none" stroke-linecap="butt"/><path d="M743 307.5 L759 307.5" stroke="#c88400" stroke-width="1" fill="none" stroke-linecap="butt"/><rect x="723" y="404" width="2" height="7.5" fill="#c88400"/><rect x="753" y="404" width="2" height="7.5" fill="#c88400"/><rect x="753" y="300" width="2" height="7.5" fill="#c88400"/><path d="M792 411.5 L800 411.5" stroke="#d89200" stroke-width="1" fill="none" stroke-linecap="butt"/><path d="M792 307.5 L808 307.5" stroke="#d89200" stroke-width="1" fill="none" stroke-linecap="butt"/><path d="M807.5 307.5 V355.8" stroke="#d89200" stroke-width="1" fill="none" stroke-dasharray="10.5 2.5" stroke-dashoffset="8.3"/><path d="M807.5 362 V411.5" stroke="#d89200" stroke-width="1" fill="none" stroke-dasharray="10.5 2.5" stroke-dashoffset="0"/><path d="M815.2 363.5 H823.5 V491.5 H695" stroke="#d89200" stroke-width="1" fill="none" stroke-dasharray="10.5 2.5" stroke-dashoffset="0.7"/><rect x="806" y="362" width="4" height="4" fill="#d89200"/><rect x="795" y="404" width="2" height="7.5" fill="#d89200"/><rect x="795" y="300" width="2" height="7.5" fill="#d89200"/><rect x="699" y="484" width="2" height="7.5" fill="#d89200"/><circle cx="775.5" cy="307.5" r="16" fill="#f6f7ff" stroke="#000" stroke-width="1.1"/><path d="M784.5 300.8 L773 310.5" stroke="#000" stroke-width="2.1" fill="none" stroke-linecap="round"/><path d="M767 315.6 L771.2 306.8 L774 309.3 L776.3 311.2 L777.3 313.8 Z" fill="#000"/></svg>
<div class="t" style="left:617.00px;top:388.64px;font-size:12px;letter-spacing:-0.025px;color:#333333;font-weight:normal;">10kΩ</div>
<div class="t" style="left:689.20px;top:388.64px;font-size:12px;letter-spacing:-0.092px;color:#333333;font-weight:normal;">10kΩ</div>
<div class="t" style="left:761.00px;top:388.64px;font-size:12px;letter-spacing:0.042px;color:#333333;font-weight:normal;">10kΩ</div>
<div class="t" style="left:760.60px;top:276.74px;font-size:12px;letter-spacing:-0.419px;color:#333333;font-weight:normal;">1.67V</div>
<div class="t" style="left:680.00px;top:468.54px;font-size:12px;letter-spacing:-0.825px;color:#333333;font-weight:normal;">5V</div>
<svg style="position:absolute;left:1012px;top:370px" width="22" height="26">
<defs><linearGradient id="cg" x1="0" y1="0" x2="0" y2="1"><stop offset="0" stop-color="#fafafa"/><stop offset="0.6" stop-color="#d8d8d8"/><stop offset="1" stop-color="#f4f4f4"/></linearGradient></defs>
<filter id="cs" x="-50%" y="-50%" width="200%" height="200%"><feGaussianBlur stdDeviation="1"/></filter><path d="M3.8 21.5 L14 23.8 L17 16" stroke="#000" stroke-opacity="0.18" stroke-width="2" fill="none" filter="url(#cs)"/><path d="M3.4 3.3 L16.8 14.3 L13.6 22.3 L3.4 20.2 Z" fill="url(#cg)" stroke="#000" stroke-width="1.3" stroke-linejoin="round"/></svg>
</body></html>
